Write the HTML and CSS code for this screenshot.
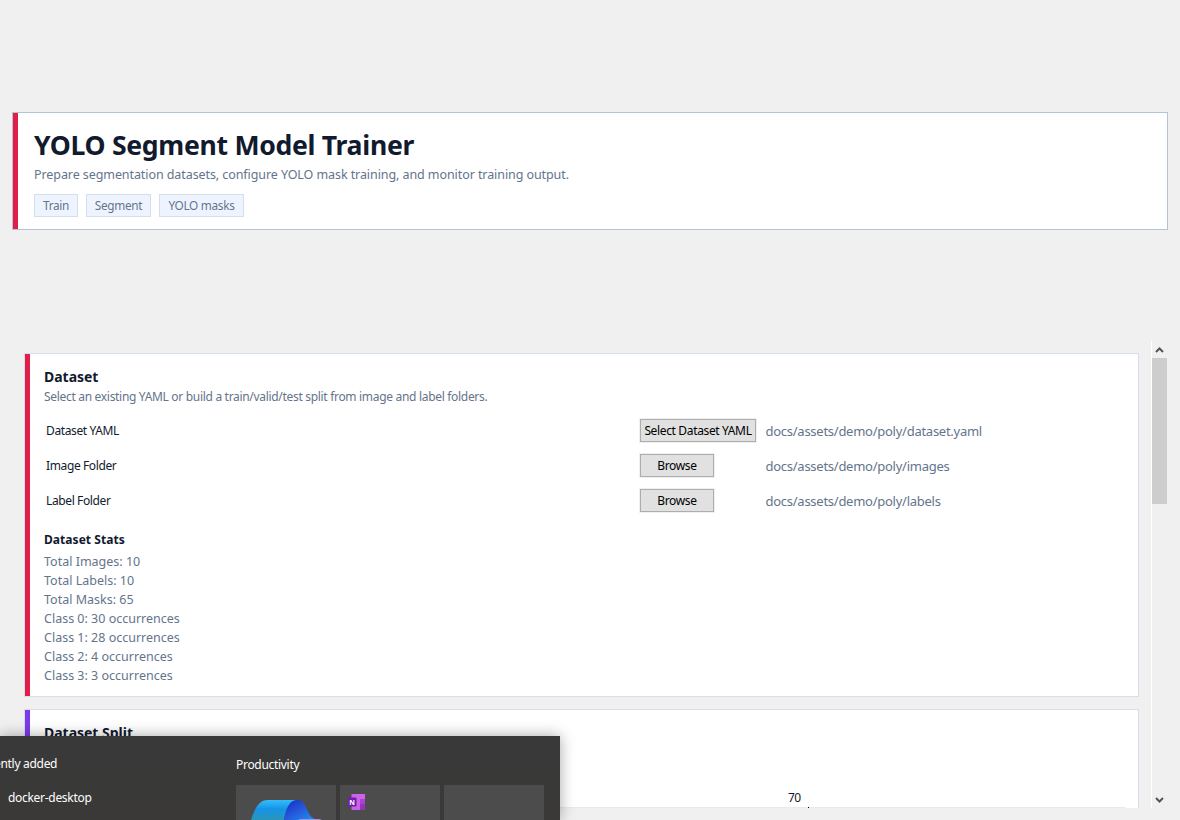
FILE: index.html
```
<!DOCTYPE html>
<html lang="en">
    <head>
        <meta charset="UTF-8" />
        <title>YOLO Segment Model Trainer</title>
        <link rel="stylesheet" href="styles.css" />
    </head>
    <body>
        <header class="hero">
            <h1>YOLO Segment Model Trainer</h1>
            <p class="hero-text">Prepare segmentation datasets, configure YOLO mask training, and monitor training output.</p>
            <div class="tags">
                <span class="tag tag-train">Train</span>
                <span class="tag tag-segment">Segment</span>
                <span class="tag tag-masks">YOLO masks</span>
            </div>
        </header>

        <main class="scroll-area">
            <div class="cards">
                <section class="card">
                    <h2>Dataset</h2>
                    <p class="card-text">Select an existing YAML or build a train/valid/test split from image and label folders.</p>
                    <div class="rows">
                        <div class="row">
                            <label>Dataset YAML</label>
                            <div><button class="wide">Select Dataset YAML</button></div>
                            <span class="path">docs/assets/demo/poly/dataset.yaml</span>
                        </div>
                        <div class="row">
                            <label>Image Folder</label>
                            <div><button>Browse</button></div>
                            <span class="path">docs/assets/demo/poly/images</span>
                        </div>
                        <div class="row">
                            <label>Label Folder</label>
                            <div><button>Browse</button></div>
                            <span class="path">docs/assets/demo/poly/labels</span>
                        </div>
                    </div>
                    <h3>Dataset Stats</h3>
                    <ul class="stats">
                        <li>Total Images: 10</li>
                        <li>Total Labels: 10</li>
                        <li>Total Masks: 65</li>
                        <li>Class 0: 30 occurrences</li>
                        <li>Class 1: 28 occurrences</li>
                        <li>Class 2: 4 occurrences</li>
                        <li>Class 3: 3 occurrences</li>
                    </ul>
                </section>

                <section class="card split">
                    <h2>Dataset Split</h2>
                    <div class="slider">
                        <span class="slider-value">70</span>
                        <div class="track"><i></i></div>
                    </div>
                </section>
            </div>

            <div class="scrollbar">
                <svg class="arrow" width="15" height="17" viewBox="0 0 15 17">
                    <path d="M4 11 7.5 7.5 11 11" fill="none" stroke="#555" stroke-width="2" />
                </svg>
                <div class="thumb"></div>
                <svg class="arrow" width="15" height="17" viewBox="0 0 15 17">
                    <path d="M4 7 7.5 10.5 11 7" fill="none" stroke="#555" stroke-width="2" />
                </svg>
            </div>
        </main>

        <!-- Start menu over the window -->
        <aside class="start-menu">
            <div class="apps">
                <p class="recent">ently added</p>
                <p class="app">docker-desktop</p>
            </div>
            <div class="group">
                <p class="group-title">Productivity</p>
                <div class="tiles">
                    <div class="tile">
                        <svg width="100" height="35" viewBox="0 0 100 35">
                            <defs>
                                <linearGradient id="ribbon" x1="0" y1="0" x2="0" y2="1">
                                    <stop offset="0" stop-color="#35bdf8" />
                                    <stop offset=".45" stop-color="#1495e8" />
                                    <stop offset="1" stop-color="#2b94b8" />
                                </linearGradient>
                                <linearGradient id="fold" x1="0" y1="0" x2="1" y2="1">
                                    <stop offset="0" stop-color="#0c2fc4" />
                                    <stop offset=".5" stop-color="#2858db" />
                                    <stop offset="1" stop-color="#159bf2" />
                                </linearGradient>
                            </defs>
                            <path d="M15 35C19 23 23 15 32 15H61C53 16 50 25 48 35Z" fill="url(#ribbon)" />
                            <path d="M48 35C50 24 53 15 61 15C71 15 70 29 77 33L80 35Z" fill="url(#fold)" />
                            <path d="M62 35 65 34H83L86 35Z" fill="#b58af0" />
                        </svg>
                    </div>
                    <div class="tile">
                        <svg width="100" height="35" viewBox="0 0 100 35">
                            <rect x="11.5" y="9" width="13.5" height="16" fill="#c963e8" />
                            <rect x="20" y="14" width="5" height="5" fill="#aa42cf" />
                            <rect x="20" y="19" width="5" height="6" fill="#9332bd" />
                            <rect x="8" y="12.5" width="8.5" height="9" rx="1" fill="#7719aa" />
                            <text class="note-letter" x="12.2" y="19.5" text-anchor="middle">N</text>
                        </svg>
                    </div>
                    <div class="tile"></div>
                </div>
            </div>
        </aside>
    </body>
</html>
```
FILE: styles.css
```
* {
    box-sizing: border-box;
}
body {
    margin: 0;
    width: 1180px;
    height: 820px;
    overflow: hidden;
    position: relative;
    padding: 112px 12px 12px;
    background: #f0f0f0;
    font-family: "Noto Sans", "Open Sans", sans-serif;
    color: #111a2e;
}
h1,
h2,
h3,
p,
ul {
    margin: 0;
    padding: 0;
}
.hero {
    height: 118px;
    background: #fff;
    border: 1px solid #b5c3d7;
    box-shadow: inset 5px 0 #e11d48;
    padding: 14px 21px 0;
}
h1 {
    font-size: 26.6px;
    line-height: 36px;
    letter-spacing: -0.3px;
    white-space: nowrap;
}
.hero-text {
    font-size: 12.5px;
    line-height: 20px;
    letter-spacing: -0.08px;
    margin-top: 2px;
    color: #64748b;
}
.tags {
    display: flex;
    gap: 8px;
    margin-top: 9px;
}
.tag {
    height: 23px;
    line-height: 21px;
    font-size: 11.8px;
    letter-spacing: -0.3px;
    text-align: center;
    white-space: nowrap;
    color: #64748b;
    background: #eef4ff;
    border: 1px solid #d5dfec;
}
.tag-train {
    width: 44px;
}
.tag-segment {
    width: 65px;
}
.tag-masks {
    width: 85px;
}
.scroll-area {
    display: flex;
    justify-content: space-between;
    height: 467px;
    margin-top: 111px;
    overflow: hidden;
}
.cards {
    width: 1115px;
    margin-left: 12px;
    padding-top: 12px;
}
.card {
    height: 344px;
    background: #fff;
    border: 1px solid #d5dfec;
    box-shadow: inset 5px 0 #e11d48;
    padding: 12px 19px;
}
h2 {
    font-size: 14px;
    line-height: 22px;
    letter-spacing: -0.02px;
}
.card-text {
    font-size: 12px;
    line-height: 17px;
    letter-spacing: -0.31px;
    color: #64748b;
}
.rows {
    margin-top: 8px;
}
.row {
    display: grid;
    grid-template-columns: 594px 125.5px 1fr;
    align-items: center;
    height: 35px;
    padding-left: 2px;
    font-size: 12px;
    letter-spacing: -0.38px;
}
button {
    display: block;
    width: 74px;
    height: 23px;
    padding: 0;
    font: 12px "Noto Sans", sans-serif;
    letter-spacing: -0.35px;
    white-space: nowrap;
    color: #000;
    background: #e1e1e1;
    border: 1px solid #adadad;
    box-shadow: 0 0 0 1px #f0f0f0;
}
.wide {
    width: 116px;
}
.path {
    font-size: 13px;
    letter-spacing: -0.26px;
    color: #64748b;
}
h3 {
    font-size: 12px;
    line-height: 18px;
    letter-spacing: 0.05px;
    margin-top: 13px;
}
.stats {
    list-style: none;
    margin-top: 3px;
    font-size: 12.5px;
    line-height: 19px;
    color: #64748b;
}
.split {
    margin-top: 12px;
    box-shadow: inset 5px 0 #7c3aed;
}
.slider {
    margin: 45px -6px 0 511px;
    font-size: 12px;
    line-height: 18px;
    letter-spacing: -0.5px;
}
.slider-value {
    display: block;
    margin-left: 233px;
    height: 18px;
}
.track {
    height: 3px;
    background: #e8eaf1;
    padding-left: 253px;
}
.track i {
    display: block;
    width: 1px;
    height: 1px;
    background: #000;
}
.scrollbar {
    width: 17px;
    display: flex;
    flex-direction: column;
    border-left: 1px solid #fff;
}
.arrow {
    display: block;
}
.thumb {
    width: 15px;
    height: 146px;
    margin-bottom: auto;
    background: #cdcdcd;
}
.start-menu {
    position: absolute;
    left: 0;
    top: 736px;
    width: 560px;
    height: 84px;
    display: flex;
    background: linear-gradient(#393939, #3a3938);
    box-shadow: 0 0 14px rgba(0, 0, 0, 0.35);
    color: #fff;
    font-size: 12px;
    line-height: 18px;
    letter-spacing: -0.3px;
}
.apps {
    width: 236px;
    padding-top: 19px;
}
.recent {
    margin-left: -6px;
}
.app {
    margin: 16px 0 0 8px;
}
.group-title {
    padding-top: 20px;
}
.tiles {
    display: flex;
    gap: 4px;
    margin-top: 11px;
}
.tile {
    width: 100px;
    height: 35px;
    background: #4c4c4c;
}
.tile svg {
    display: block;
}
.note-letter {
    font: bold 7px "Noto Sans", sans-serif;
    letter-spacing: 0;
    fill: #fff;
}
```
